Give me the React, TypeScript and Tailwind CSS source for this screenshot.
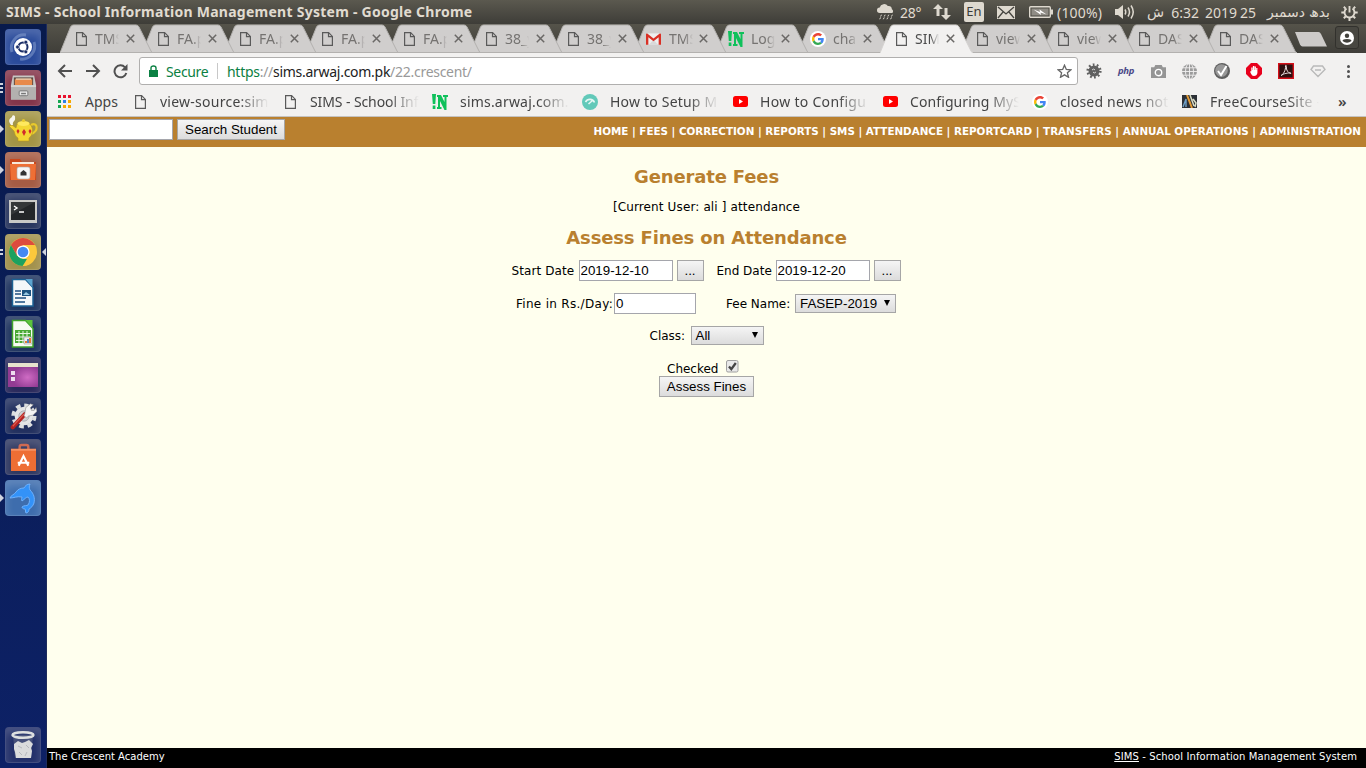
import React from "react";

function PageIcon({ className = "" }: { className?: string }) {
  return (
    <svg width="11" height="14" viewBox="0 0 11 14" className={"shrink-0 " + className} fill="none" stroke="#5a5a5a" strokeWidth="1.2">
      <path d="M.6.6h6l3.800 3.800v9H.6z" />
      <path d="M6.500.8v3.800h3.800" />
    </svg>
  );
}

function GoogleIcon({ size = 12 }: { size?: number }) {
  return (
    <span className="flex size-4 shrink-0 items-center justify-center rounded-full bg-white">
      <svg width={size} height={size} viewBox="0 0 48 48">
        <path fill="#EA4335" d="M24 9.5c3.5 0 6.700 1.200 9.200 3.600l6.900-6.900C35.900 2.400 30.500 0 24 0 14.600 0 6.500 5.400 2.600 13.200l8 6.200C12.400 13.700 17.700 9.500 24 9.500z" />
        <path fill="#4285F4" d="M47 24.600c0-1.600-.2-3.100-.4-4.600H24v9h12.900c-.6 3-2.200 5.500-4.700 7.200l7.700 6C44.400 38 47 31.800 47 24.600z" />
        <path fill="#FBBC05" d="M10.500 28.600c-.5-1.500-.8-3-.8-4.600s.3-3.100.8-4.600l-8-6.200C.9 16.500 0 20.100 0 24s.9 7.500 2.600 10.800l7.900-6.200z" />
        <path fill="#34A853" d="M24 48c6.500 0 11.900-2.100 15.900-5.800l-7.700-6c-2.200 1.500-4.900 2.300-8.200 2.300-6.300 0-11.600-4.200-13.500-9.900l-7.900 6.200C6.500 42.600 14.600 48 24 48z" />
      </svg>
    </span>
  );
}

function NIcon() {
  return (
    <svg width="16" height="16" viewBox="0 0 16 16" className="shrink-0" fill="#0fc15b">
      <path d="M0 0h4l-.7 10H.8zM.7 11.500h2.700V15H.7zM5 1h4l3.500 7V3H11V1h5v2h-1.500v13h-2L8 7v6h1.500v2H5v-2h1V3H5z" />
    </svg>
  );
}

function GmailIcon() {
  return (
    <svg width="15" height="12" viewBox="0 0 16 12" className="shrink-0">
      <path fill="#eee" d="M1 0h14v12H1z" />
      <path fill="#d9d9d9" d="M3 12l5-5 5 5z" />
      <path fill="#d93025" d="M0 1.300C0 .3 1 0 1.700.3L8 5.500 14.300.3c.7-.3 1.700 0 1.700 1V12h-2.500V4L8 8.500 2.500 4v8H0z" />
    </svg>
  );
}

type TabInfo = { t: string; icon?: "g" | "n" | "m"; active?: boolean; narrow?: boolean };
const tabs: TabInfo[] = [
  { t: "TMS" }, { t: "FA.p" }, { t: "FA.p" }, { t: "FA.p" }, { t: "FA.p" },
  { t: "38_y" }, { t: "38_y" }, { t: "TMS", icon: "m" }, { t: "Log", icon: "n" }, { t: "cha", icon: "g" },
  { t: "SIM", active: true, narrow: true }, { t: "view", narrow: true }, { t: "view", narrow: true }, { t: "DAS", narrow: true }, { t: "DAS", narrow: true },
];

function Tab({ tab, order }: { tab: TabInfo; order: number }) {
  const wide = !!tab.icon;
  return (
    <div style={{ zIndex: order }} className={"relative flex h-[29px] shrink-0 items-center " + (tab.narrow ? "w-[81px]" : "w-[82px]")}>
      <svg width="94" height="29" viewBox="0 0 94 29" className="absolute top-0 left-0">
        <path d="M0 29L10.500 3Q11.500 1 13.500 1H76Q78 1 79 3L91 27Q92 29 93 29z" fill={tab.active ? "#f2f1f0" : "#d0cecd"} />
        <path d="M0 29L10.500 3Q11.500 1 13.500 1H76Q78 1 79 3L91 27Q92 29 93 29" fill="none" stroke={tab.active ? "#d5d3d1" : "#b3b1af"} />
        {!tab.active && <path d="M0 28.500h93" stroke="#b3b1af" />}
      </svg>
      <div className={"relative flex h-full items-center " + (wide ? "pl-[12px]" : "pl-4")}>
        <span className={"flex items-center " + (wide ? "w-[23px]" : "w-[19px]")}>
          {tab.icon === "g" ? <GoogleIcon /> : tab.icon === "n" ? <NIcon /> : tab.icon === "m" ? <GmailIcon /> : <PageIcon />}
        </span>
        <span className={"w-[24px] overflow-hidden text-[14px] leading-5 whitespace-nowrap [mask-image:linear-gradient(90deg,#000_65%,transparent_100%)] " + (tab.active ? "text-[#4c4c4c]" : "text-[#757371]")}>{tab.t}</span>
        <svg width="9" height="9" viewBox="0 0 9 9" className={wide ? "ml-[6px]" : "ml-[7px]"} stroke="#6a6866" strokeWidth="1.500"><path d="M.8.8l7.400 7.400M8.200.8L.8 8.200" /></svg>
      </div>
    </div>
  );
}

const ar = "font-['DejaVu_Sans',sans-serif] text-[14px]";

function TopBar() {
  return (
    <header className="flex h-6 shrink-0 items-center bg-linear-to-b from-[#5b594f] to-[#3e3d38] pl-[6px] text-[#e0dbd0]">
      <div className="w-[871px] shrink-0 text-[14px] leading-6 font-bold tracking-[0.26px] whitespace-nowrap">SIMS - School Information Management System - Google Chrome</div>
      <svg width="19" height="18" viewBox="0 0 21 18" className="shrink-0" fill="#ded9cf">
        <path d="M3 10a3 3 0 010-6 5 5 0 019-1.500A4 4 0 0116.500 6a2.500 2.500 0 01.5 4z" />
        <path d="M5 12l-1 2M9 12l-1 2M13 12l-1 2M17 12l-1 2M4 15l-1 2M8 15l-1 2M12 15l-1 2M16 15l-1 2" stroke="#ded9cf" strokeWidth="1.100" />
      </svg>
      <span className="ml-[4px] w-[33px] shrink-0 text-[14px] tracking-[-0.2px] whitespace-nowrap">28°</span>
      <svg width="18" height="16" viewBox="0 0 18 16" className="shrink-0" fill="#ded9cf"><path d="M5 0l5 5H6.500v7h-3V5H0zM13 16l-5-5h3.500V4h3v7H18z" /></svg>
      <span className="ml-[13px] flex h-5 w-5 shrink-0 items-center justify-center rounded-[2px] bg-[#ded9cf] text-[13px] text-[#3c3b37]">En</span>
      <svg width="18" height="13" viewBox="0 0 18 13" className="ml-[13px] shrink-0"><path fill="#ded9cf" d="M0 0h18v13H0z" /><path d="M1 1l8 7 8-7M1 12l5-6M17 12l-5-6" fill="none" stroke="#45443f" strokeWidth="1.300" /></svg>
      <svg width="24" height="12" viewBox="0 0 24 12" className="ml-[14px] shrink-0"><rect x=".7" y=".7" width="20.600" height="10.600" rx="1" fill="none" stroke="#ded9cf" strokeWidth="1.400" /><path fill="#8f8c85" d="M2.500 2.500h17v7h-17z" /><path fill="#ded9cf" d="M22 3.500h2v5h-2z" /><path fill="#fff" d="M4.500 3.500L11 6l-.5-2.500L17.500 8.500 11.500 6.500l.5 2.500z" /></svg>
      <span className="ml-[4px] w-[58px] shrink-0 text-[14px] tracking-[0.2px] whitespace-nowrap">(100%)</span>
      <svg width="20" height="16" viewBox="0 0 20 16" className="shrink-0" fill="none" stroke="#ded9cf" strokeWidth="1.500"><path fill="#ded9cf" stroke="none" d="M0 5h3l5-4v14l-5-4H0z" /><path d="M10 5.500q1.500 2.500 0 5M13 3.500q3 4.500 0 9M16 1.500q4.500 6.500 0 13" /></svg>
      <span dir="rtl" className="ml-[12px] flex w-[183px] shrink-0 items-center text-[14px] whitespace-nowrap">
        <span className="w-[25px]"><span className={ar}>بدھ</span></span>
        <span className={ar + " w-[49px]"}>دسمبر</span>
        <span className="w-[19px]">25</span>
        <span className="w-[38px]">2019</span>
        <span className="w-[35px]">6:32</span>
        <span className={ar}>ش</span>
      </span>
      <svg width="17" height="17" viewBox="0 0 17 17" className="ml-[11px] shrink-0" fill="none" stroke="#ded9cf"><path d="M5.500 4.500a5 5 0 106 0" strokeWidth="1.900" /><path d="M8.500 2v6.500" strokeWidth="1.900" /><path d="M8.500 13.500V17M.300 8.500H3.500M13.500 8.500h3.200M2.800 14.200l2-2M14.200 14.200l-2-2M2.800 2.800l1.800 1.800M14.200 2.800l-1.800 1.800" strokeWidth="2" /></svg>
    </header>
  );
}

const tile = "relative flex size-9 shrink-0 items-center justify-center rounded-[4px] border border-white/15 shadow-[inset_0_5px_8px_rgba(255,255,255,0.18)] ";

function Marks({ n }: { n: number }) {
  return (
    <svg width="4" height="12" viewBox="0 0 4 12" className="absolute top-[11px] -left-[6px]" fill="#cfd3df">
      {n === 1 ? <path d="M0 2l4 4-4 4z" /> : n === 2 ? <path d="M0 3h3v2H0zM0 7h3v2H0z" /> : <path d="M0 1h3v2H0zM0 5h3v2H0zM0 9h3v2H0z" />}
    </svg>
  );
}

function Launcher() {
  return (
    <nav className="flex w-[47px] shrink-0 flex-col items-start gap-[5px] border-r border-[#1d2b5c] bg-linear-to-b from-[#081a4c] to-[#0d2166] pt-[5px] pb-[5px] pl-[5px]">
      <div className={tile + "bg-[#2a4b9b]"}>
        <svg width="34" height="34" viewBox="0 0 34 34"><path d="M6 22A13 13 0 0120 5M28 12A13 13 0 0114 29" fill="none" stroke="#8ea5d4" strokeWidth="3" opacity=".5" /><circle cx="17" cy="17" r="9" fill="#fff" /><circle cx="17" cy="17" r="4.500" fill="none" stroke="#1a2d66" strokeWidth="2" /><circle cx="11.500" cy="17" r="1.900" fill="#1a2d66" stroke="#fff" strokeWidth=".6" /><circle cx="19.800" cy="12.200" r="1.900" fill="#1a2d66" stroke="#fff" strokeWidth=".6" /><circle cx="19.800" cy="21.800" r="1.900" fill="#1a2d66" stroke="#fff" strokeWidth=".6" /></svg>
      </div>
      <div className={tile + "bg-[#84354a]"}><Marks n={3} />
        <svg width="27" height="28" viewBox="0 0 28 28"><path fill="#c8c6c4" d="M3 1h22l2 10v15H1V11z" /><path fill="#5c4a42" d="M4 3h20v8H4z" /><path fill="#e88a4b" d="M5 5h18v6H5z" /><path fill="#f5d3b1" d="M6 4h16v1.500H6z" /><path fill="#b3b1af" d="M1 11h26v15H1z" /><path fill="#d5d3d1" d="M1 11h26v2H1z" /><rect x="9.500" y="17" width="9" height="5" rx="1" fill="#e8e8e8" stroke="#777" /><path fill="#777" d="M11.500 19h5v1.500h-5z" /></svg>
      </div>
      <div className={tile + "bg-[#a39545]"}><Marks n={1} />
        <svg width="32" height="32" viewBox="0 0 32 32"><path d="M24 12c7-4 8 7 0 9" fill="none" stroke="#e8c92c" strokeWidth="2.200" /><path fill="#f4d733" stroke="#b8931c" strokeWidth=".6" d="M10 11h13c4 5 3 11-1 14v3H11v-3c-3-2-3-4-4-7l-5-5 3-1 4 3z" /><ellipse cx="16.500" cy="10.500" rx="6" ry="2.500" fill="#ffe95e" /><circle cx="16.500" cy="7.500" r="1.600" fill="#e8c92c" /><path fill="#d22b2b" d="M11 16l1.500 2-1.500 3-1.500-3zM17 16l2 3-2 4-2-4zM23 16l1.500 2-1.500 3-1.500-3z" /><path fill="#fff" d="M4 12C1 8 2 6 5 4c0-3 4-2 3 1 1 3-3 3-2 7z" opacity=".9" /></svg>
      </div>
      <div className={tile + "bg-[#a55c44]"}><Marks n={1} />
        <svg width="28" height="24" viewBox="0 0 28 24"><path fill="#c9471c" d="M1 1h10l2 3h14v18H1z" /><path fill="#f7e8da" d="M3 4h22v3H3z" /><path fill="#ee6f35" d="M1 6h26l-1 16H2z" /><rect x="8" y="9" width="13" height="12" rx="2" fill="#f6f6f6" stroke="#aaa" strokeWidth=".6" /><path fill="#333" d="M11.500 17.500v-3l3-2.500 3 2.500v3z" /></svg>
      </div>
      <div className={tile + "bg-[#29365f]"}>
        <svg width="28" height="23" viewBox="0 0 28 23"><path fill="#c9c9c7" d="M0 0h28v23H0z" /><path fill="#232629" d="M2 2h24v18H2z" /><path fill="#45484a" d="M2 2h24L2 15z" opacity=".5" /><path d="M5 6l3 2-3 2M10 12h5" fill="none" stroke="#fff" strokeWidth="1.400" /></svg>
      </div>
      <div className={tile + "bg-[#a2914c]"}><Marks n={2} />
        <svg width="28" height="28" viewBox="0 0 28 28"><circle cx="14" cy="14" r="14" fill="#fbc83c" /><path fill="#dd4b3e" d="M14 7h12.100A14 14 0 001.900 7l6 10.500z" /><path fill="#1da15f" d="M1.900 7l6 10.500L14 21h6l-6.500 7A14 14 0 011.900 7z" /><path fill="#fbc83c" d="M20 17.500L13.800 28q4 0 7-2z" /><circle cx="14" cy="14" r="6.600" fill="#fff" /><circle cx="14" cy="14" r="5.300" fill="#4688f1" /></svg>
        <svg width="4" height="8" viewBox="0 0 4 8" className="absolute top-[13px] -right-[6px]" fill="#cfd3df"><path d="M4 0v8L0 4z" /></svg>
      </div>
      <div className={tile + "bg-[#203560]"}>
        <svg width="24" height="30" viewBox="0 0 24 30"><path fill="#f4f7f9" stroke="#1c6294" strokeWidth="1.500" d="M1.500 1.500h13l7.500 8v18.500H1.500z" /><path fill="#5ba3ce" d="M14.500 1h7v8z" /><path d="M4 13h6M4 16h6M4 20h11M4 24h10" stroke="#1d4f80" strokeWidth="1.700" /><path fill="#1d5380" d="M11 12h9v6h-9z" /><path fill="#9bcbe4" d="M12 17l3-3 4 3z" /></svg>
      </div>
      <div className={tile + "bg-[#203560]"}>
        <svg width="24" height="30" viewBox="0 0 24 30"><path fill="#f6fbf2" stroke="#40a32b" strokeWidth="1.500" d="M1.500 1.500h13l7.500 8v18.500H1.500z" /><path fill="#5bc33c" d="M14.500 1h7v8z" /><path fill="#49a834" d="M4 11h16v13H4z" /><path d="M5 14.500h14M5 18h14M5 21.500h14M8 12v12M12 12v12M16 12v12" stroke="#e8f6e2" /><path fill="#eee" stroke="#888" strokeWidth=".5" d="M13 18h8v7h-8z" /><path fill="#e57b30" d="M14 22h2v2h-2zM18 19h2v5h-2z" /><path fill="#4d87c4" d="M16 20h2v4h-2z" /></svg>
      </div>
      <div className={tile + "bg-[#29295c]"}>
        <svg width="30" height="24" viewBox="0 0 30 24"><defs><radialGradient id="pg" cx=".65" cy=".6"><stop offset="0" stopColor="#cf6cc4" /><stop offset="1" stopColor="#923b93" /></radialGradient></defs><path fill="url(#pg)" d="M0 0h30v24H0z" /><path fill="#e7e2cd" d="M0 0h30v4H0z" /><path fill="#eddcee" d="M3 8h4v4H3zM3 14h4v4H3z" /></svg>
      </div>
      <div className={tile + "bg-[#22305f]"}>
        <svg width="28" height="28" viewBox="0 0 30 30"><circle cx="16" cy="15" r="11.500" fill="none" stroke="#dcdedf" strokeWidth="4" strokeDasharray="5 4.030" /><circle cx="16" cy="15" r="10" fill="#e4e5e6" /><circle cx="16" cy="15" r="5.500" fill="#cfd1d4" stroke="#a9acb3" /><path d="M4 27L17 13" stroke="#b32222" strokeWidth="4.500" strokeLinecap="round" /><path d="M4 26L16 13" stroke="#df5b4e" strokeWidth="1.300" /><path fill="#f3f3f3" stroke="#888" strokeWidth=".6" d="M17 12l1-6 5-4 3 1-3 3 1 3 3 0 2-3 1 4-4 4-5 1-2 2-3-2z" /></svg>
      </div>
      <div className={tile + "bg-[#2f3861]"}>
        <svg width="27" height="29" viewBox="0 0 28 30"><path d="M10 10V4q0-2 2-2h5q2 0 2 2v6" fill="none" stroke="#cf6a52" strokeWidth="2.500" /><path fill="#ee6e34" d="M1 6h26v23H1z" /><path fill="#f69262" d="M1 6h26v2H1z" /><path d="M9 23.500l5-10 5 10M8 20.500h12" fill="none" stroke="#fff" strokeWidth="2.200" /></svg>
      </div>
      <div className={tile + "bg-[#3e6dad]"}><Marks n={1} />
        <svg width="28" height="31" viewBox="0 0 28 31"><path fill="#3392f8" stroke="#75b6ff" strokeWidth=".9" d="M1 15c1-3 4-3 6-6 2-3 5-4 8-4 1-2 3-4 6-4-1 2-1 4 0 6 4 4 5 8 4 13-1 3-3 5-5 6 0 2-1 4-3 4-1-1 0-3-1-4-2 0-3-1-3-2 2-2 5-1 6-2 2-3 2-6 0-8-2 0-3 2-6 4-1-2 0-3 0-4-5-1-8 1-12 1z" /></svg>
      </div>
      <div className={tile + "mt-auto bg-[#23306a]"}>
        <svg width="26" height="30" viewBox="0 0 26 30"><path fill="#5d6685" opacity=".6" d="M3 5h20l-2 23H5z" /><ellipse cx="13" cy="5" rx="10.500" ry="2.800" fill="none" stroke="#dddfe0" strokeWidth="2.400" /><path fill="#dadbdc" d="M4 14l4-3 4 2 3-1 4-2 4 4-2 4 1 3-1 7H6l-1-6-1-3z" /><path d="M8 16l4 2M16 15l3 3M9 22l3 3M17 22l-2 4" stroke="#b5b8be" /></svg>
      </div>
    </nav>
  );
}

const fade = "overflow-hidden whitespace-nowrap [mask-image:linear-gradient(90deg,#000_72%,transparent_100%)] ";

function YT() {
  return <svg width="15" height="11" viewBox="0 0 15 11" className="shrink-0"><rect width="15" height="11" rx="2.500" fill="#f00" /><path fill="#fff" d="M6 3l4 2.500L6 8z" /></svg>;
}

function Chrome() {
  return (
    <div className="shrink-0">
      <div className="isolate flex h-[29px] items-start bg-linear-to-b from-[#55534a] to-[#3f3e39] pl-[13px]">
        {tabs.map((t, i) => <Tab key={i} tab={t} order={t.active ? 30 : 20 - i} />)}
        <svg width="33" height="16" viewBox="0 0 33 16" className="mt-[7px] ml-[9px] shrink-0"><path d="M1 1h23.500q1.500 0 2.500 2l6 12.500H8.500q-1.500 0-2.500-2z" fill="#cccac8" /></svg>
        <div className="mt-[2px] ml-[8px] flex h-[23px] w-6 shrink-0 items-center justify-center rounded-[3px] border border-[#32312d] bg-[#484741]">
          <svg width="14" height="14" viewBox="0 0 14 14"><circle cx="7" cy="7" r="7" fill="#fff" /><circle cx="7" cy="4.800" r="2.200" fill="#42413c" /><path fill="#42413c" d="M2.500 10q0-2 4.500-2t4.500 2q-4.500 3.500-9 0z" /></svg>
        </div>
      </div>
      <div className="flex h-9 items-center bg-[#f2f1f0] pl-[10px]">
        <svg width="16" height="14" viewBox="0 0 16 14" fill="none" stroke="#505050" strokeWidth="2"><path d="M15 7H2M8 1L2 7l6 6" /></svg>
        <svg width="16" height="14" viewBox="0 0 16 14" className="ml-[12px]" fill="none" stroke="#505050" strokeWidth="2"><path d="M1 7h13M8 1l6 6-6 6" /></svg>
        <svg width="15" height="15" viewBox="0 0 15 15" className="ml-[12px] mr-px" fill="none" stroke="#505050" strokeWidth="2"><path d="M12 3.300A6 6 0 1013.300 9" /><path fill="#505050" stroke="none" d="M14.500 0v6.500H8z" /></svg>
        <div className="ml-[10px] flex h-7 w-[939px] shrink-0 items-center rounded-[3px] border border-[#b0afae] bg-white pl-[9px] text-[14px]">
          <svg width="9" height="12" viewBox="0 0 9 12" className="shrink-0"><path fill="#0b8043" d="M0 5h9v7H0z" /><path d="M2 5V3q0-2 2.500-2T7 3v2" fill="none" stroke="#0b8043" strokeWidth="1.400" /></svg>
          <span className="ml-[8px] w-[51px] tracking-[-0.35px] text-[#0b8043]">Secure</span>
          <span className="h-4 w-px bg-[#c8c8c8]" />
          <span className="ml-[9px] tracking-[-0.28px] whitespace-nowrap text-[#999]"><span className="text-[#0b8043]">https</span>://<span className="text-[#222]">sims.arwaj.com.pk</span>/22.crescent/</span>
          <svg width="15" height="14" viewBox="0 0 24 23" className="mr-[5px] ml-auto" fill="none" stroke="#666" strokeWidth="2.200"><path d="M12 2l3 7 7.500.6-5.700 4.900 1.800 7.300L12 17.800l-6.600 4 1.800-7.300L1.500 9.600 9 9z" /></svg>
        </div>
        <div className="ml-[8px] flex items-center">
          <svg width="16" height="16" viewBox="0 0 16 16" className="shrink-0"><circle cx="8" cy="8" r="5.500" fill="#606060" /><circle cx="8" cy="8" r="6.300" fill="none" stroke="#606060" strokeWidth="2.600" strokeDasharray="1.700 2.257" /><path d="M6 7q2-2 3 0M7 9q1 2 3 0" stroke="#d5d5d5" fill="none" /></svg>
          <span className="ml-[16px] w-[17px] shrink-0 text-[9.500px] leading-4 font-bold tracking-[-0.3px] text-[#4b4a88] italic">php</span>
          <svg width="15" height="13" viewBox="0 0 14 12" className="ml-[16px] shrink-0"><path fill="#959595" d="M0 2h3l1-2h6l1 2h3v10H0z" /><circle cx="7" cy="7" r="3" fill="none" stroke="#fff" strokeWidth="1.300" /></svg>
          <svg width="15" height="15" viewBox="0 0 15 15" className="ml-[16px] shrink-0" fill="none"><circle cx="7.500" cy="7.500" r="7.500" fill="#9b9b9b" /><g stroke="#f2f1f0" strokeWidth=".9"><ellipse cx="7.500" cy="7.500" rx="4" ry="8" /><path d="M7.500 0v15M0 7.500h15M0 3.800h15M0 11.200h15" /></g></svg>
          <svg width="16" height="16" viewBox="0 0 16 16" className="ml-[17px] shrink-0"><circle cx="8" cy="8" r="8" fill="#5f5f5f" /><circle cx="7.500" cy="7.500" r="6.300" fill="#989898" /><path d="M4 8l3 4 5.500-9" fill="none" stroke="#fff" strokeWidth="2" /></svg>
          <svg width="16" height="16" viewBox="0 0 16 16" className="ml-[16px] shrink-0"><path fill="#e8001c" d="M5 0h6l5 5v6l-5 5H5l-5-5V5z" /><path fill="#fff" d="M4 8.500l1.300-.3V4.500h1.300V7h.3V3h1.400v4h.3V3.500h1.300V7h.3V5h1.200v5q-.5 3-3.500 3-2 0-3-2.500z" /></svg>
          <svg width="16" height="16" viewBox="0 0 16 16" className="ml-[16px] shrink-0"><path fill="#2d1010" stroke="#d40f18" strokeWidth="1.400" d="M.7.7h14.600v14.600H.7z" /><path d="M3 12.500C5 12 8 7 7.500 3c0-1 1-1 .8.500C8 7 10 10 13 10.500c1-.8-6-1-10 2z" fill="none" stroke="#e9dede" /></svg>
          <svg width="16" height="14" viewBox="0 0 16 14" className="ml-[16px] shrink-0" fill="none" stroke="#b9b9b9" strokeWidth="1.400"><path d="M3.500 2h9L15 5.500 8 12.500 1 5.500zM5 6h6" /></svg>
          <svg width="3" height="13" viewBox="0 0 3 13" className="ml-[21px] shrink-0" fill="#505050"><circle cx="1.500" cy="1.500" r="1.500" /><circle cx="1.500" cy="6.500" r="1.500" /><circle cx="1.500" cy="11.500" r="1.500" /></svg>
        </div>
      </div>
      <div className="flex h-7 items-center border-b border-[#c5c3c1] bg-[#f2f1f0] pb-[2px] pl-[11px] text-[14px] text-[#444]">
        <svg width="13" height="13" viewBox="0 0 13 13" className="shrink-0"><path fill="#e8112d" d="M0 0h3v3H0zM5 0h3v3H5zM10 0h3v3h-3z" /><path fill="#14a651" d="M0 5h3v3H0zM0 10h3v3H0z" /><path fill="#2d7fe8" d="M5 5h3v3H5z" /><path fill="#f6a800" d="M10 5h3v3h-3zM5 10h3v3H5zM10 10h3v3h-3z" /></svg>
        <span className="ml-[14px] w-[50px]">Apps</span>
        <PageIcon /><span className={fade + "ml-[14px] w-[109px] tracking-[0.25px]"}>view-source:sim</span>
        <PageIcon className="ml-[16px]" /><span className={fade + "ml-[14px] w-[109px] tracking-[-0.1px]"}>SIMS - School Inf</span>
        <span className="ml-[13px] flex"><NIcon /></span><span className={fade + "ml-[12px] w-[109px] tracking-[0.2px]"}>sims.arwaj.com.</span>
        <svg width="16" height="16" viewBox="0 0 16 16" className="ml-[13px] shrink-0"><circle cx="8" cy="8" r="8" fill="#62c9b9" /><path d="M3.500 8A5 5 0 0112.500 8.500M6.500 10l4-3.500" fill="none" stroke="#e4f7f4" strokeWidth="1.600" /></svg>
        <span className={fade + "ml-[12px] w-[109px] tracking-[0.2px]"}>How to Setup M</span>
        <span className="ml-[14px]"><YT /></span><span className={fade + "ml-[12px] w-[109px] tracking-[0.3px]"}>How to Configu</span>
        <span className="ml-[14px]"><YT /></span><span className={fade + "ml-[12px] w-[109px] tracking-[0.1px]"}>Configuring MyS</span>
        <span className="ml-[13px]"><GoogleIcon /></span><span className={fade + "ml-[12px] w-[109px] tracking-[0.2px]"}>closed news not</span>
        <svg width="15" height="13" viewBox="0 0 15 13" className="ml-[13px] shrink-0"><path fill="#2c3036" d="M0 0h15v13H0z" /><path d="M1 12l3-8v8" stroke="#6fa0c8" strokeWidth="1.400" fill="none" /><path d="M5 0l5 13" stroke="#e39a35" strokeWidth="2" /><path d="M8 0l4 11M11 4l3 4-1 4" stroke="#d9dcc5" strokeWidth="1.500" fill="none" /></svg>
        <span className={fade + "ml-[13px] w-[109px] tracking-[0.25px]"}>FreeCourseSite -</span>
        <span className="ml-[19px] text-[15px] font-semibold">»</span>
      </div>
    </div>
  );
}

const field = "h-[21px] border border-[#a5a6ac] bg-white px-px font-['Liberation_Sans',Arial,sans-serif] text-[13.333px] text-black outline-none ";
const btn = "h-[21px] border border-[#a6a6a6] bg-linear-to-b from-[#f5f5f5] to-[#dcdcdc] text-center font-['Liberation_Sans',Arial,sans-serif] text-[13.333px] leading-[18px] whitespace-nowrap text-black ";

function Select({ value, className }: { value: string; className: string }) {
  return (
    <button className={"flex h-[19px] items-center justify-between border border-[#a6a6a6] bg-linear-to-b from-[#f5f5f5] to-[#dcdcdc] pr-[5px] pl-1 font-['Liberation_Sans',Arial,sans-serif] text-[13.333px] leading-[17px] whitespace-nowrap text-black " + className}>
      {value}
      <svg width="6" height="6" viewBox="0 0 6 6" className="mb-[2px]"><path d="M0 0h6L3 6z" /></svg>
    </button>
  );
}

const links = ["HOME", "FEES", "CORRECTION", "REPORTS", "SMS", "ATTENDANCE", "REPORTCARD", "TRANSFERS", "ANNUAL OPERATIONS", "ADMINISTRATION"];

function Site() {
  return (
    <section className="flex min-h-0 flex-1 flex-col bg-[#ffffee] font-['DejaVu_Sans',Verdana,sans-serif] text-[12px] text-black">
      <div className="flex h-[30px] shrink-0 items-start bg-[#b9802f] pt-[2px] pr-[5px] pl-[2px]">
        <input aria-label="Student" className={field + "w-[124px]"} />
        <button className={btn + "ml-1 w-[108px]"}>Search Student</button>
        <div className="mt-[5px] ml-auto text-[10.350px] leading-[15px] font-bold whitespace-nowrap text-white">{links.join(" | ")}</div>
      </div>
      <main className="flex flex-1 flex-col items-center">
        <h1 className="mt-[19px] h-[22px] text-[18px] leading-[22px] font-bold tracking-[-0.14px] text-[#b9802f]">Generate Fees</h1>
        <p className="mt-[11px] h-4 leading-4 tracking-[0.13px] whitespace-pre">[Current User: ali ] attendance</p>
        <h2 className="mt-[12px] h-[22px] text-[18px] leading-[22px] font-bold tracking-[-0.14px] text-[#b9802f]">Assess Fines on Attendance</h2>
        <div className="mt-[11px] flex w-[390px] items-center whitespace-nowrap">
          <span className="w-[67px] tracking-[0.1px]">Start Date</span>
          <input aria-label="Start" defaultValue="2019-12-10" className={field + "w-[94px]"} />
          <button className={btn + "ml-1 w-[27px]"}>...</button>
          <span className="ml-[13px] w-[59px]">End Date</span>
          <input aria-label="End" defaultValue="2019-12-20" className={field + "w-[94px]"} />
          <button className={btn + "ml-1 w-[27px]"}>...</button>
        </div>
        <div className="mt-[12px] flex w-[381px] items-center whitespace-nowrap">
          <span className="w-[98px] tracking-[0.3px]">Fine in Rs./Day:</span>
          <input aria-label="Fine" defaultValue="0" className={field + "w-[82px]"} />
          <span className="ml-[30px] w-[69px]">Fee Name:</span>
          <Select value="FASEP-2019" className="w-[101px]" />
        </div>
        <div className="mt-[12px] flex w-[114px] items-center whitespace-nowrap">
          <span className="w-[41px]">Class:</span>
          <Select value="All" className="w-[73px]" />
        </div>
        <div className="mt-[15px] flex h-4 w-[79px] items-start whitespace-nowrap">
          <span className="mr-[-7px] w-[66px] pt-px leading-4">Checked</span>
          <svg width="13" height="13" viewBox="0 0 13 13" className="shrink-0"><rect x=".5" y=".5" width="11.500" height="11.500" rx="1.500" fill="#e9e9e9" stroke="#a0a0a0" /><path d="M3 6.500l2.300 2.700L9.800 3" fill="none" stroke="#444" strokeWidth="2.300" /></svg>
        </div>
        <button className={btn + "w-[95px]"}>Assess Fines</button>
      </main>
      <footer className="flex h-5 shrink-0 justify-between bg-black pr-[9px] pl-[2px] text-[10px] leading-[17px] text-white">
        <span>The Crescent Academy</span>
        <span className="tracking-[0.11px]"><a className="underline">SIMS</a> - School Information Management System</span>
      </footer>
    </section>
  );
}

export default function App() {
  return (
    <div className="flex h-[768px] w-[1366px] flex-col overflow-hidden font-['Noto_Sans','DejaVu_Sans',sans-serif]">
      <TopBar />
      <div className="flex min-h-0 flex-1">
        <Launcher />
        <div className="flex min-w-0 flex-1 flex-col">
          <Chrome />
          <Site />
        </div>
      </div>
    </div>
  );
}
